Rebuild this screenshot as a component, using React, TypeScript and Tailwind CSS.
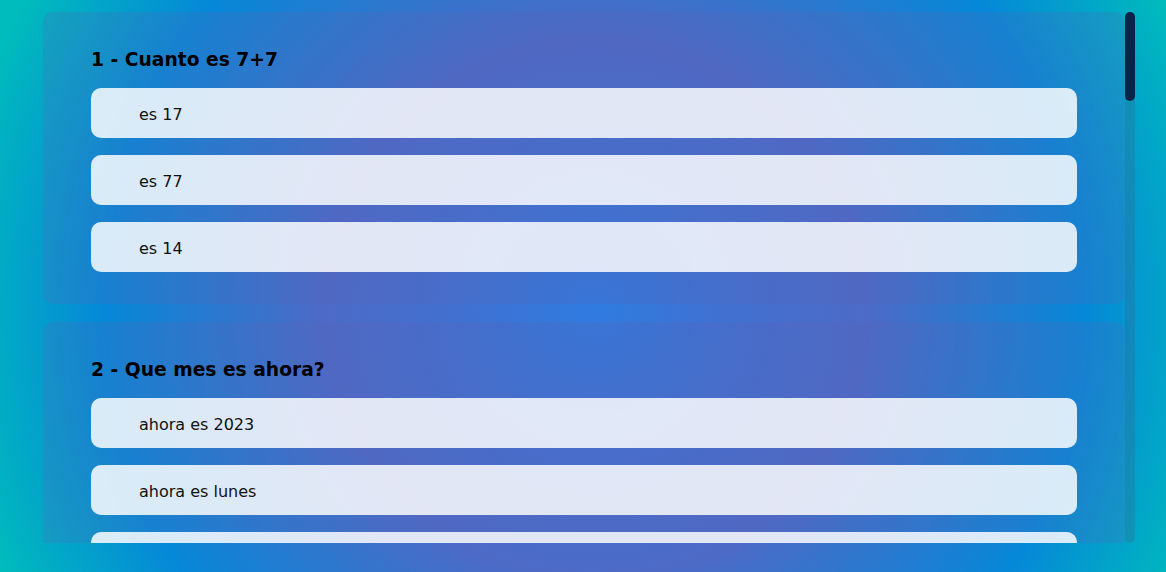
import React from "react";

type Question = { title: string; options: string[] };

const QUESTIONS: Question[] = [
  { title: "Cuanto es 7+7", options: ["es 17", "es 77", "es 14"] },
  { title: "Que mes es ahora?", options: ["ahora es 2023", "ahora es lunes", "ahora es junio"] },
  { title: "Cual es la capital de Francia?", options: ["es Madrid", "es Paris", "es Roma"] },
  { title: "Cuantos dias tiene una semana?", options: ["tiene 5", "tiene 7", "tiene 10"] },
  { title: "De que color es el cielo?", options: ["es verde", "es azul", "es rojo"] },
  { title: "Cuanto es 3x3", options: ["es 6", "es 9", "es 33"] },
  { title: "Cuantas patas tiene un perro?", options: ["tiene 2", "tiene 4", "tiene 6"] },
  { title: "Que planeta es el mas grande?", options: ["es Marte", "es Jupiter", "es la Tierra"] },
  { title: "Cuanto es 10-4", options: ["es 6", "es 14", "es 104"] },
  { title: "Cuantos meses tiene un año?", options: ["tiene 10", "tiene 12", "tiene 14"] },
];

function QuestionCard({ q, n }: { q: Question; n: number }) {
  return (
    <div className="flex flex-none flex-col rounded-[10px] bg-[rgba(90,100,180,0.22)] px-12 pb-[32px] pt-[37px]">
      <h3 className="text-[18.7px] font-bold leading-[22px] text-black">
        {n} - {q.title}
      </h3>
      <div className="mt-[17px] flex flex-col gap-[17px]">
        {q.options.map((opt) => (
          <div
            key={opt}
            className="flex h-[50px] items-center rounded-[10px] bg-[rgba(255,255,255,0.84)] pl-12 pt-[3px] text-[16px] text-[#111]"
          >
            {opt}
          </div>
        ))}
      </div>
    </div>
  );
}

export default function App() {
  return (
    <div className="h-[572px] overflow-hidden bg-[radial-gradient(circle_at_51%_54%,#2f7be0_0px,#4270d0_140px,#4d6ac6_270px,#0688d8_490px,#00bcbc_650px)] pt-[12px] font-['DejaVu_Sans',Verdana,sans-serif]">
      <div className="ml-[43px] flex h-[531px] w-[1092px]">
        <div className="flex w-[1082px] flex-col gap-[18px] overflow-hidden">
          {QUESTIONS.map((q, i) => (
            <QuestionCard key={q.title} q={q} n={i + 1} />
          ))}
        </div>
        <div className="flex w-[10px] flex-col rounded-full bg-[rgba(60,90,120,0.25)]">
          <div className="h-[89px] rounded-full bg-[#0b2349]" />
        </div>
      </div>
    </div>
  );
}
